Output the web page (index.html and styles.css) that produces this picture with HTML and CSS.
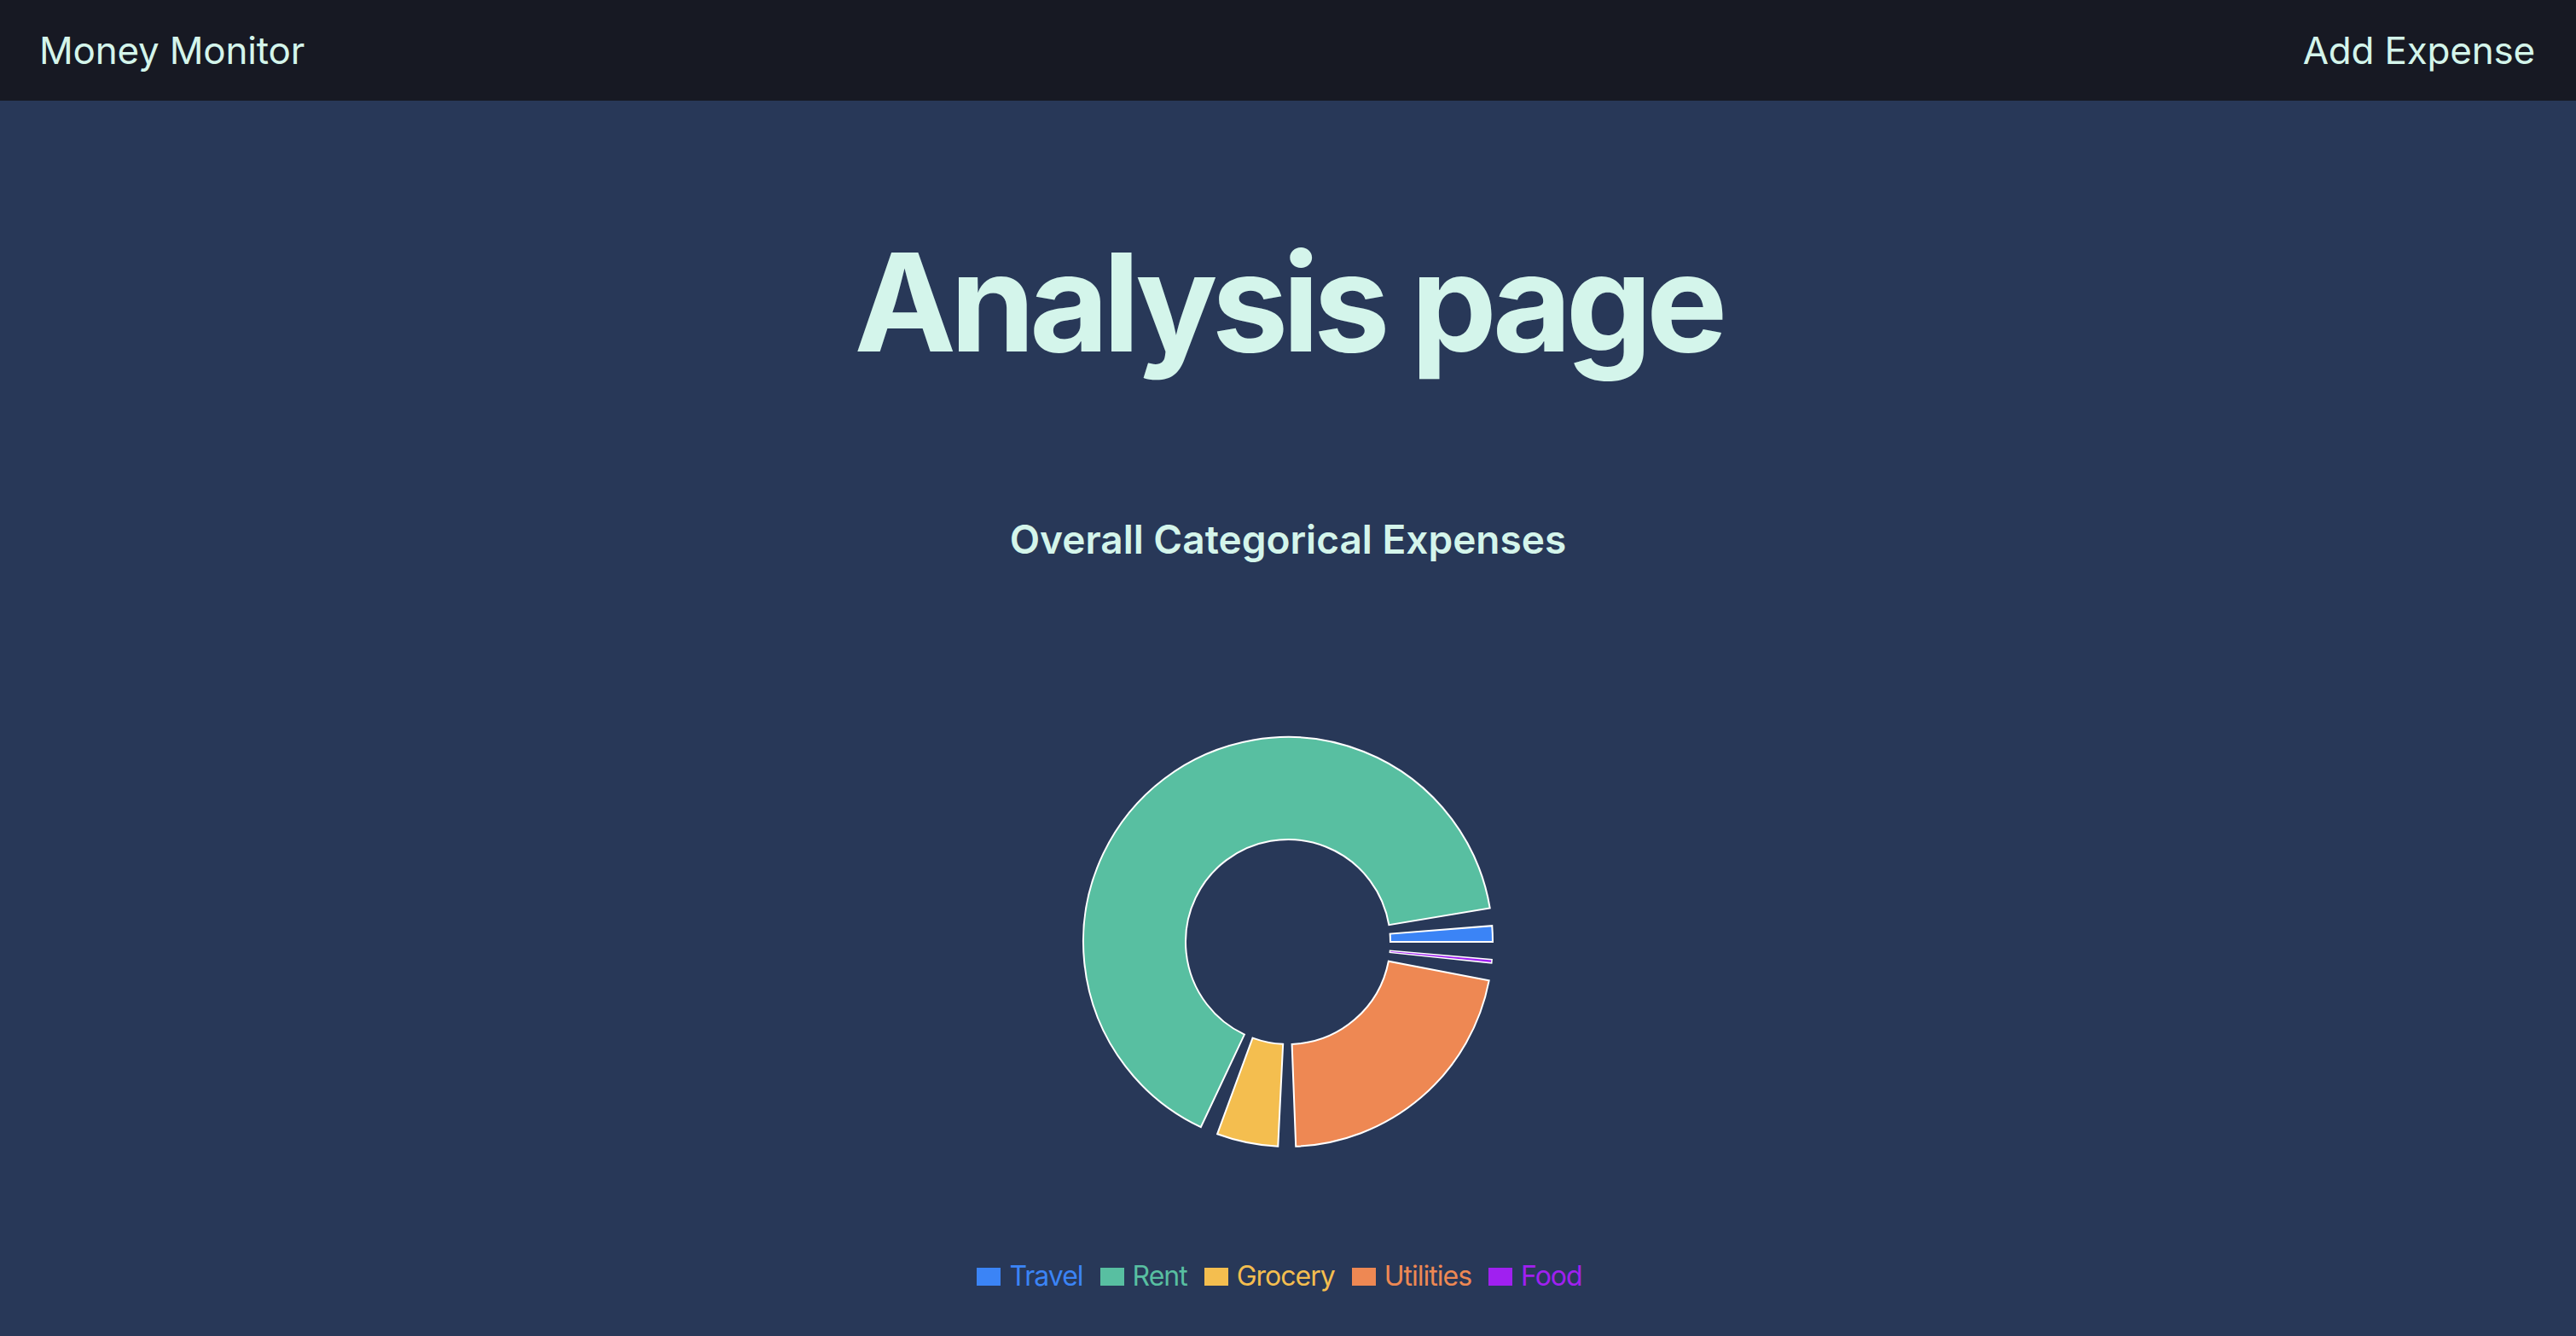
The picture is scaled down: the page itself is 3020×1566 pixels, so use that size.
FILE: index.html
```html
<!DOCTYPE html>
<html lang="en">
<head>
<meta charset="utf-8">
<title>Money Monitor</title>
<link rel="stylesheet" href="styles.css">
</head>
<body>
<nav class="navbar">
  <a class="brand" href="#">Money Monitor</a>
  <a class="nav-link" href="#">Add Expense</a>
</nav>
<main class="page">
  <h1 class="page-title">Analysis page</h1>
  <section class="chart-card">
    <h2 class="chart-title">Overall Categorical Expenses</h2>
    <svg class="donut" width="500" height="500" viewBox="0 0 500 500">
      <g stroke="#ffffff" stroke-width="2" stroke-linejoin="miter">
        <path fill="#3b84f6" d="M 489.26 231.17 A 240 240 0 0 1 490 250 L 370 250 A 120 120 0 0 0 369.63 240.59 Z"/>
        <path fill="#58bfa1" d="M 147.81 467.16 A 240 240 0 1 1 486.71 210.39 L 368.35 230.19 A 120 120 0 1 0 198.91 358.58 Z"/>
        <path fill="#f4be4f" d="M 238.28 489.71 A 240 240 0 0 1 167.13 475.24 L 208.56 362.62 A 120 120 0 0 0 244.14 369.86 Z"/>
        <path fill="#ee8853" d="M 485.67 295.38 A 240 240 0 0 1 259.21 489.82 L 254.61 369.91 A 120 120 0 0 0 367.84 272.69 Z"/>
        <path fill="#a020f0" stroke-width="1.5" d="M 489.09 270.72 A 240 240 0 0 1 488.73 274.87 L 369.36 262.43 A 120 120 0 0 0 369.54 260.36 Z"/>
      </g>
    </svg>
    <ul class="legend">
      <li class="legend-item travel"><span class="swatch"></span>Travel</li>
      <li class="legend-item rent"><span class="swatch"></span>Rent</li>
      <li class="legend-item grocery"><span class="swatch"></span>Grocery</li>
      <li class="legend-item utilities"><span class="swatch"></span>Utilities</li>
      <li class="legend-item food"><span class="swatch"></span>Food</li>
    </ul>
  </section>
</main>
</body>
</html>
```
FILE: styles.css
```css
html, body {
  margin: 0;
  padding: 0;
}
body {
  background: #283858;
  color: #d4f5eb;
  font-family: Inter, "Noto Sans", "Liberation Sans", sans-serif;
  min-height: 1566px;
}
.navbar {
  height: 118px;
  box-sizing: border-box;
  background: #171923;
  display: flex;
  align-items: center;
  justify-content: space-between;
  padding: 0 48px 0 46px;
}
.brand, .nav-link {
  color: #d4f5eb;
  text-decoration: none;
  font-size: 44px;
  font-weight: 400;
  letter-spacing: -0.2px;
  line-height: 1;
}
.page {
  display: flex;
  flex-direction: column;
  align-items: center;
}
.page-title {
  margin: 156px 0 0;
  font-size: 160px;
  line-height: 1;
  font-weight: 700;
  letter-spacing: -6.8px;
}
.chart-card {
  display: flex;
  flex-direction: column;
  align-items: center;
}
.chart-title {
  margin: 175px 0 0;
  font-size: 46px;
  line-height: 1;
  font-weight: 600;
  letter-spacing: 0;
}
.donut {
  display: block;
  margin-top: 199px;
}
.legend {
  list-style: none;
  margin: 122px 0 0;
  padding: 0;
  display: flex;
  justify-content: center;
  font-size: 32px;
  line-height: 40px;
  letter-spacing: -1px;
}
.legend-item {
  display: flex;
  align-items: center;
  margin-right: 20px;
}
.swatch {
  width: 28px;
  height: 21px;
  margin-right: 10px;
  background: currentColor;
}
.travel { color: #3b84f6; }
.rent { color: #58bfa1; }
.grocery { color: #f4be4f; }
.utilities { color: #ee8853; }
.food { color: #a020f0; }
```
